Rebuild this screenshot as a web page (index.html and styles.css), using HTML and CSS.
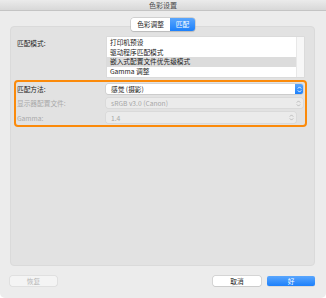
FILE: index.html
```html
<!DOCTYPE html>
<html>
<head>
<meta charset="utf-8">
<link rel="stylesheet" href="styles.css">
</head>
<body>
<div class="window">
  <div class="titlebar">色彩设置</div>
  <div class="content">
    <div class="tabs">
      <div class="seg">色彩调整</div>
      <div class="seg active">匹配</div>
    </div>
    <div class="panel">
      <div class="row mode">
        <div class="label">匹配模式:</div>
        <div class="list">
          <div class="items">
            <div class="item">打印机预设</div>
            <div class="item">驱动程序匹配模式</div>
            <div class="item sel">嵌入式配置文件优先级模式</div>
            <div class="item">Gamma 调整</div>
          </div>
          <div class="track"></div>
        </div>
      </div>
      <div class="focusbox">
        <div class="row">
          <div class="label">匹配方法:</div>
          <div class="popup">
            <span class="ptext">感觉 (摄影)</span>
            <span class="cap"><svg width="5" height="7" viewBox="0 0 5 7"><path d="M0.8 2.6 L2.5 0.9 L4.2 2.6 M0.8 4.4 L2.5 6.1 L4.2 4.4" fill="none" stroke="#fff" stroke-width="0.9"/></svg></span>
          </div>
        </div>
        <div class="row">
          <div class="label dim">显示器配置文件:</div>
          <div class="popup off">
            <span class="ptext">sRGB v3.0 (Canon)</span>
            <span class="arrows"><svg width="5" height="7" viewBox="0 0 5 7"><path d="M0.8 2.6 L2.5 0.9 L4.2 2.6 M0.8 4.4 L2.5 6.1 L4.2 4.4" fill="none" stroke="#b0b0b0" stroke-width="0.8"/></svg></span>
          </div>
        </div>
        <div class="row">
          <div class="label dim">Gamma:</div>
          <div class="popup off gamma">
            <span class="ptext">1.4</span>
            <span class="arrows"><svg width="5" height="7" viewBox="0 0 5 7"><path d="M0.8 2.6 L2.5 0.9 L4.2 2.6 M0.8 4.4 L2.5 6.1 L4.2 4.4" fill="none" stroke="#b0b0b0" stroke-width="0.8"/></svg></span>
          </div>
        </div>
      </div>
    </div>
    <div class="buttons">
      <div class="btn disabled">恢复</div>
      <div class="spacer"></div>
      <div class="btn">取消</div>
      <div class="btn primary">好</div>
    </div>
  </div>
</div>
</body>
</html>
```
FILE: styles.css
```css
* { box-sizing: border-box; }
html, body { margin: 0; padding: 0; background: #ffffff; }
body {
  font-family: "Noto Sans CJK SC", "Noto Sans", sans-serif;
  font-size: 6.7px;
  color: #222;
}
.window {
  width: 326px;
  height: 298px;
  background: #ececec;
  border-radius: 0 0 5px 5px;
  overflow: hidden;
  display: flex;
  flex-direction: column;
}
.titlebar {
  height: 11px;
  line-height: 10px;
  text-align: center;
  font-size: 7px;
  color: #4a4a4a;
  background: linear-gradient(#ebebeb, #d8d8d8);
  border-bottom: 1px solid #c4c4c4;
}
.content {
  padding: 7px 11px 0 10px;
  display: flex;
  flex-direction: column;
}
.tabs {
  display: flex;
  align-self: center;
  margin-left: 1px;
  height: 13px;
  margin-bottom: -5px;
  position: relative;
  z-index: 2;
  border-radius: 3px;
  box-shadow: 0 0 0 0.5px #b8b8b8, 0 0.5px 1px rgba(0,0,0,0.15);
  overflow: hidden;
}
.seg {
  width: 39px;
  background: #fff;
  text-align: center;
  line-height: 13px;
  color: #222;
}
.seg.active {
  width: 25px;
  background: linear-gradient(#5aa6fd, #1c80fb);
  color: #fff;
}
.panel {
  height: 240px;
  background: #e2e2e2;
  border: 1px solid #dadada;
  border-radius: 4px;
  padding: 10px 0 0 0;
  display: flex;
  flex-direction: column;
}
.row {
  display: flex;
  align-items: center;
}
.label {
  width: 96px;
  padding-left: 6px;
  flex: none;
}
.label.dim { color: #a9a9a9; }
.mode { align-items: flex-start; }
.mode .label { padding-top: 1px; }
.list {
  width: 197px;
  height: 40px;
  background: #fff;
  display: flex;
  box-shadow: 0 0 0 0.5px #d4d4d4;
}
.items {
  flex: 1;
  padding-top: 1px;
}
.item {
  height: 9.5px;
  line-height: 9.5px;
  padding-left: 3px;
  color: #1a1a1a;
}
.item.sel { background: #dcdcdc; }
.track {
  width: 8px;
  background: #f7f7f7;
  border-left: 1px solid #e8e8e8;
}
.focusbox {
  margin: 3px 7px 0 3px;
  height: 47px;
  border: 2px solid #fb8a0a;
  border-radius: 4px;
  padding: 2px 0 0 0;
  display: flex;
  flex-direction: column;
  gap: 4px;
}
.focusbox .label { width: 90px; padding-left: 1px; }
.popup {
  width: 197px;
  height: 10px;
  background: #fff;
  border-radius: 2px;
  box-shadow: 0 0 0 0.5px #c4c4c4, 0 0.5px 0.5px rgba(0,0,0,0.12);
  display: flex;
  align-items: center;
}
.ptext { flex: 1; padding-left: 5px; line-height: 10px; }
.cap {
  width: 8px;
  height: 10px;
  border-radius: 0 2px 2px 0;
  background: linear-gradient(#5aa6fd, #1c80fb);
  display: flex;
  align-items: center;
  justify-content: center;
}
.popup.off {
  background: #ebebeb;
  box-shadow: 0 0 0 0.5px #d2d2d2;
  color: #a6a6a6;
}
.popup.gamma { width: 190px; height: 11px; }
.arrows {
  width: 9px;
  display: flex;
  align-items: center;
  justify-content: center;
}
.buttons {
  display: flex;
  margin-top: 10px;
  gap: 6px;
}
.spacer { flex: 1; }
.btn {
  width: 48px;
  height: 10px;
  line-height: 10px;
  text-align: center;
  background: #fff;
  border-radius: 2px;
  box-shadow: 0 0 0 0.5px #bdbdbd, 0 0.5px 0.5px rgba(0,0,0,0.15);
  color: #222;
}
.btn.disabled {
  width: 47px;
  background: #f4f4f4;
  box-shadow: 0 0 0 0.5px #d3d3d3;
  color: #b5b5b5;
}
.btn.primary {
  background: linear-gradient(#5aa6fd, #1c80fb);
  color: #fff;
  box-shadow: 0 0.5px 0.5px rgba(0,0,0,0.15);
}
```
